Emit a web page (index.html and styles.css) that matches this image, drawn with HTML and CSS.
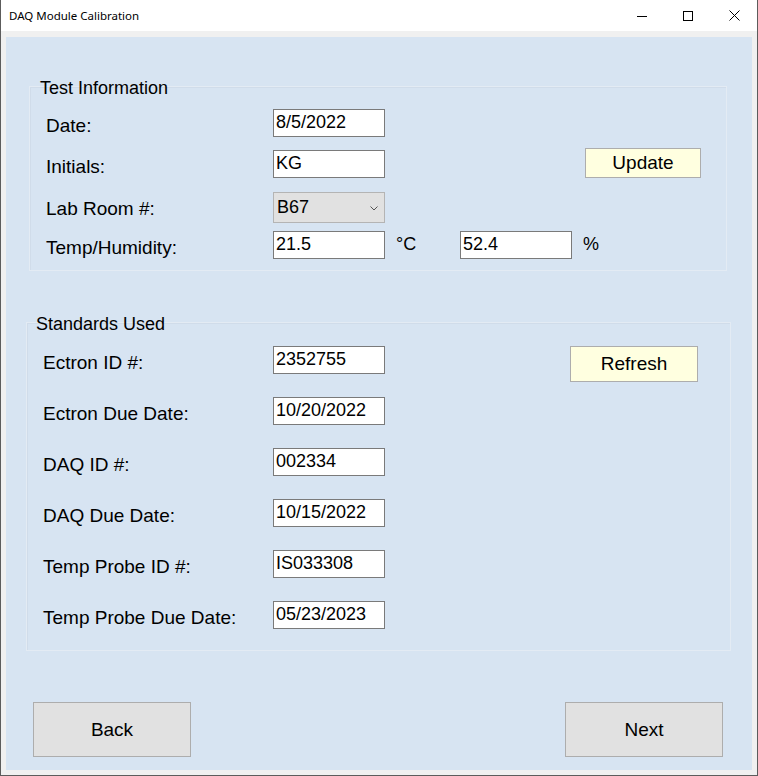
FILE: index.html
```html
<!DOCTYPE html>
<html>
<head>
<meta charset="utf-8">
<title>DAQ Module Calibration</title>
<link rel="stylesheet" href="styles.css">
</head>
<body>
<div class="window">
  <div class="titlebar">
    <span class="title">DAQ Module Calibration</span>
    <div class="caption">
      <span class="cap-btn"><svg width="10" height="10" viewBox="0 0 10 10"><path d="M0 5.5H10" stroke="#000" stroke-width="1"/></svg></span>
      <span class="cap-btn"><svg width="10" height="10" viewBox="0 0 10 10"><rect x="0.5" y="0.5" width="9" height="9" fill="none" stroke="#000" stroke-width="1"/></svg></span>
      <span class="cap-btn"><svg width="11" height="11" viewBox="0 0 11 11"><path d="M0.5 0.5L10.5 10.5M10.5 0.5L0.5 10.5" stroke="#000" stroke-width="1"/></svg></span>
    </div>
  </div>
  <div class="client">
    <div class="panel">
      <div class="group group-test">
        <div class="group-title">Test Information</div>
        <div class="test-rows">
          <div class="row">
            <span class="label">Date:</span>
            <span class="field">8/5/2022</span>
          </div>
          <div class="row">
            <span class="label">Initials:</span>
            <span class="field">KG</span>
            <span class="btn btn-yellow btn-update">Update</span>
          </div>
          <div class="row">
            <span class="label">Lab Room #:</span>
            <span class="combo">B67<svg class="chev" width="8" height="5" viewBox="0 0 8 5"><path d="M0.5 0.5L4 4L7.5 0.5" fill="none" stroke="#555" stroke-width="1"/></svg></span>
          </div>
          <div class="row">
            <span class="label">Temp/Humidity:</span>
            <span class="field">21.5</span>
            <span class="unit unit-c">°C</span>
            <span class="field">52.4</span>
            <span class="unit unit-p">%</span>
          </div>
        </div>
      </div>

      <div class="group group-std">
        <div class="group-title">Standards Used</div>
        <div class="std-rows">
          <div class="row">
            <span class="label label-wide">Ectron ID #:</span>
            <span class="field">2352755</span>
            <span class="btn btn-yellow btn-refresh">Refresh</span>
          </div>
          <div class="row">
            <span class="label label-wide">Ectron Due Date:</span>
            <span class="field">10/20/2022</span>
          </div>
          <div class="row">
            <span class="label label-wide">DAQ ID #:</span>
            <span class="field">002334</span>
          </div>
          <div class="row">
            <span class="label label-wide">DAQ Due Date:</span>
            <span class="field">10/15/2022</span>
          </div>
          <div class="row">
            <span class="label label-wide">Temp Probe ID #:</span>
            <span class="field">IS033308</span>
          </div>
          <div class="row">
            <span class="label label-wide">Temp Probe Due Date:</span>
            <span class="field">05/23/2023</span>
          </div>
        </div>
      </div>

      <div class="nav">
        <span class="btn btn-nav">Back</span>
        <span class="btn btn-nav">Next</span>
      </div>
    </div>
  </div>
</div>
</body>
</html>
```
FILE: styles.css
```css
* { box-sizing: border-box; }
html, body { margin: 0; padding: 0; }
body {
  width: 758px;
  height: 776px;
  overflow: hidden;
  font-family: "Liberation Sans", Arial, sans-serif;
  color: #000;
}
.window {
  width: 758px;
  height: 776px;
  border-left: 1px solid #5c5c5c;
  border-right: 1px solid #5c5c5c;
  border-bottom: 1px solid #5c5c5c;
  display: flex;
  flex-direction: column;
  background: #fff;
}
.titlebar {
  height: 31px;
  flex: none;
  display: flex;
  align-items: center;
  justify-content: space-between;
  background: #fff;
}
.title {
  font-family: "Noto Sans", "Open Sans", sans-serif;
  font-size: 11.5px;
  padding-left: 8px;
  color: #000;
}
.caption { display: flex; height: 31px; }
.cap-btn {
  width: 46px;
  height: 31px;
  display: flex;
  align-items: center;
  justify-content: center;
}
.client {
  flex: 1;
  background: #f0f0f0;
  padding: 6px 5px 5px 5px;
}
.panel {
  height: 733px;
  background: #d7e4f2;
  padding-top: 49px;
  font-size: 18px;
}
.group {
  border: 1px solid #e3ebf4;
  box-shadow: inset 1px 1px 0 #d0dcea;
}
.group-test {
  margin-left: 23px;
  width: 698px;
  padding-bottom: 11px;
}
.group-std {
  margin-left: 20px;
  width: 705px;
  margin-top: 51px;
  padding-bottom: 21px;
}
.group-title {
  line-height: 21px;
  height: 21px;
  margin-top: -9px;
}
.group-test .group-title { padding-left: 10px; }
.group-std .group-title { padding-left: 9px; }

.test-rows {
  margin-top: 10px;
  display: grid;
  grid-template-rows: 41px 42px 39px 28px;
}
.std-rows {
  margin-top: 11px;
  display: flex;
  flex-direction: column;
  gap: 23px;
}
.row {
  display: flex;
  align-items: flex-start;
  height: 28px;
}
.test-rows .row:nth-child(3) { height: 31px; }
.label {
  width: 243px;
  padding-left: 16px;
  line-height: 28px;
  padding-top: 3px;
  flex: none;
  font-size: 19px;
}
.label-wide { width: 246px; }
.field {
  width: 112px;
  height: 28px;
  flex: none;
  background: #fff;
  border: 1px solid #7a7a7a;
  padding-left: 2px;
  line-height: 25px;
  white-space: nowrap;
}
.combo {
  width: 112px;
  height: 31px;
  flex: none;
  background: #e1e1e1;
  border: 1px solid #b4b4b4;
  padding-left: 3px;
  line-height: 29px;
  display: flex;
  align-items: center;
  justify-content: space-between;
  padding-right: 6px;
}
.chev { margin-top: 1px; }
.unit { line-height: 27px; flex: none; }
.unit-c { margin-left: 11px; width: 64px; }
.unit-p { margin-left: 11px; }
.btn {
  display: flex;
  align-items: center;
  justify-content: center;
  border: 1px solid #adadad;
  flex: none;
  font-size: 19px;
}
.btn-yellow { background: #ffffe0; }
.btn-update {
  margin-left: 200px;
  margin-top: -2px;
  width: 116px;
  height: 30px;
}
.btn-refresh {
  margin-left: 185px;
  width: 128px;
  height: 36px;
}
.nav {
  margin-top: 51px;
  padding: 0 29px 0 27px;
  display: flex;
  justify-content: space-between;
}
.btn-nav {
  width: 158px;
  height: 55px;
  background: #e1e1e1;
}
```
